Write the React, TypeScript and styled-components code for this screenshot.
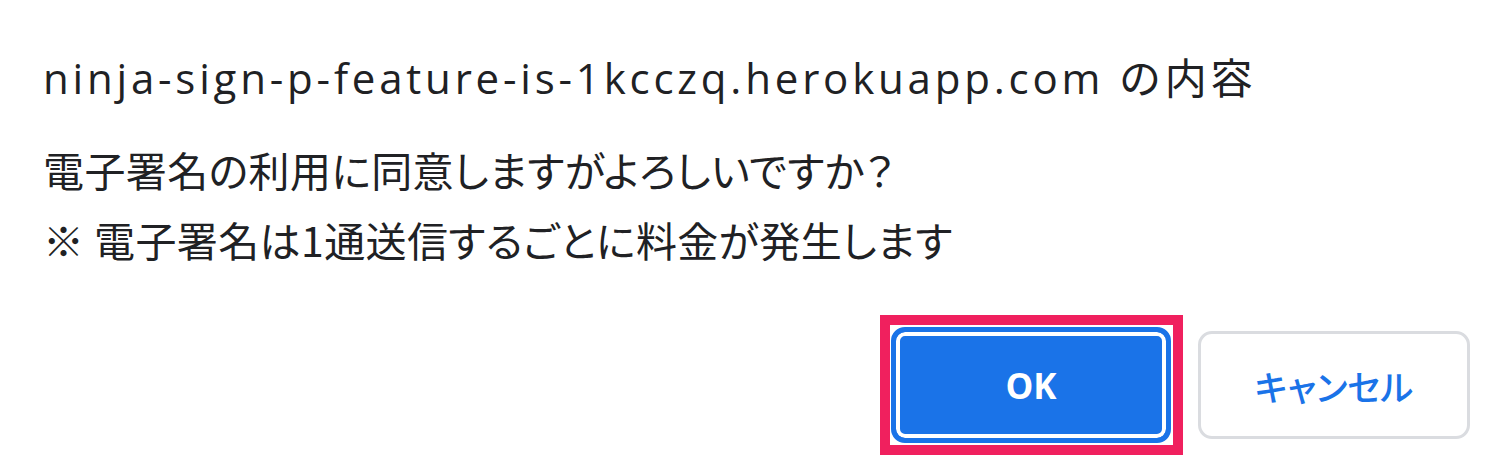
import React from 'react';
import styled, { createGlobalStyle } from 'styled-components';

const GlobalStyle = createGlobalStyle`
  html, body {
    margin: 0;
    padding: 0;
    background: #ffffff;
  }
  body {
    font-family: "Open Sans", "Noto Sans CJK JP", sans-serif;
    color: #202124;
  }
`;

const Dialog = styled.div`
  width: 1506px;
  height: 474px;
  box-sizing: border-box;
  padding: 51px 36px 0 43px;
  display: flex;
  flex-direction: column;
`;

const Title = styled.div`
  font-size: 42px;
  letter-spacing: 3.8px;
  line-height: 54px;
  color: #202124;
  white-space: nowrap;
`;

const Message = styled.div`
  margin-top: 29px;
  font-family: "Noto Sans CJK JP", sans-serif;
  font-feature-settings: "palt";
  font-size: 41px;
  letter-spacing: 0.4px;
  line-height: 70px;
  color: #202124;
  white-space: nowrap;
`;

const Buttons = styled.div`
  margin-top: 41px;
  display: flex;
  justify-content: flex-end;
  align-items: center;
  gap: 15px;
`;

const Highlight = styled.div`
  border: 10px solid #f0205e;
  padding: 2px 2px 2px 1px;
  display: flex;
`;

const Button = styled.button<{ primary?: boolean }>`
  width: ${({ primary }) => (primary ? 280 : 272)}px;
  height: ${({ primary }) => (primary ? 116 : 108)}px;
  box-sizing: border-box;
  border-radius: 14px;
  font-family: "Open Sans", "Noto Sans CJK JP", sans-serif;
  font-feature-settings: "palt";
  font-size: 35px;
  font-weight: ${({ primary }) => (primary ? 700 : 500)};
  cursor: pointer;
  background: ${({ primary }) => (primary ? '#1a73e8' : '#ffffff')};
  color: ${({ primary }) => (primary ? '#ffffff' : '#1a73e8')};
  border: ${({ primary }) => (primary ? '5px solid #1a73e8' : '3px solid #dadce0')};
  box-shadow: ${({ primary }) => (primary ? 'inset 0 0 0 4px #ffffff' : 'none')};
  padding: 0;
`;

export default function App() {
  return (
    <>
      <GlobalStyle />
      <Dialog>
        <Title>ninja-sign-p-feature-is-1kcczq.herokuapp.com の内容</Title>
        <Message>
          電子署名の利用に同意しますがよろしいですか？
          <br />※ 電子署名は1通送信するごとに料金が発生します
        </Message>
        <Buttons>
          <Highlight>
            <Button primary>OK</Button>
          </Highlight>
          <Button>キャンセル</Button>
        </Buttons>
      </Dialog>
    </>
  );
}
